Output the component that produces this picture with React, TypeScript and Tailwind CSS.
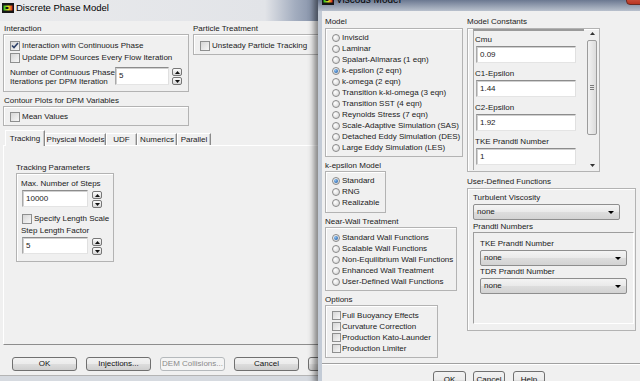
import React from "react";

const Check = ({ checked = false, small = false }: { checked?: boolean; small?: boolean }) => (
  <span
    className={`shrink-0 flex items-center justify-center border border-[#8e8f8f] bg-[linear-gradient(135deg,#d6d6d6,#f7f7f7)] ${
      small ? "w-[9px] h-[9px]" : "w-[10px] h-[10px]"
    }`}
  >
    {checked && (
      <svg width="8" height="7" viewBox="0 0 8 7">
        <path d="M1 3.5 L3 5.5 L7 1" fill="none" stroke="#2d4068" strokeWidth="1.6" />
      </svg>
    )}
  </span>
);

const Radio = ({ on = false }: { on?: boolean }) => (
  <span className="shrink-0 w-[8px] h-[8px] rounded-full border border-[#8a8a8a] bg-[radial-gradient(circle_at_35%_35%,#ffffff,#d0d0d0)] flex items-center justify-center">
    {on && <span className="w-[4px] h-[4px] rounded-full bg-[radial-gradient(circle_at_35%_35%,#8cc0f0,#14509c)]" />}
  </span>
);

const RadioRow = ({ on = false, children }: { on?: boolean; children: React.ReactNode }) => (
  <div className="h-[11px] flex items-center gap-[2px] whitespace-nowrap">
    <Radio on={on} />
    <span>{children}</span>
  </div>
);

const CheckRow = ({
  checked = false,
  small = false,
  children,
  className = "",
}: {
  checked?: boolean;
  small?: boolean;
  children: React.ReactNode;
  className?: string;
}) => (
  <div className={`h-[11px] flex items-center whitespace-nowrap ${small ? "gap-[1px]" : "gap-[2px]"} ${className}`}>
    <Check checked={checked} small={small} />
    <span>{children}</span>
  </div>
);

const Box = ({ className = "", children }: { className?: string; children?: React.ReactNode }) => (
  <div className={`border border-[#b3b3b3] shadow-[inset_1px_1px_0_#ffffff] ${className}`}>{children}</div>
);

const Field = ({ value, className = "" }: { value: string; className?: string }) => (
  <div
    className={`shrink-0 bg-white border border-t-[#8c8c8c] border-l-[#a9a9a9] border-r-[#e0e0e0] border-b-[#e4e4e4] shadow-[inset_1px_1px_0_#d0d0d0] flex items-center pl-[3px] ${className}`}
  >
    {value}
  </div>
);

const SpinBtn = ({ up }: { up?: boolean }) => (
  <div className="w-[10px] h-[8px] rounded-[2px] border border-[#767676] bg-[linear-gradient(#fbfbfb,#d8d8d8)] flex items-center justify-center">
    <svg width="5" height="3" viewBox="0 0 5 3">
      {up ? <path d="M0 3 L2.5 0 L5 3Z" fill="#111" /> : <path d="M0 0 L5 0 L2.5 3Z" fill="#111" />}
    </svg>
  </div>
);

const Spin = () => (
  <div className="flex flex-col gap-[1px] mt-[1px]">
    <SpinBtn up />
    <SpinBtn />
  </div>
);

const Select = ({ className = "" }: { className?: string }) => (
  <div
    className={`h-[16px] shrink-0 rounded-[2px] border border-[#8e8e8e] bg-[linear-gradient(#f4f4f4,#e9e9e9_50%,#dddddd_51%,#d3d3d3)] flex items-center justify-between pl-[3px] pr-[5px] ${className}`}
  >
    <span>none</span>
    <svg width="6" height="3" viewBox="0 0 6 3">
      <path d="M0 0H6L3 3Z" fill="#000" />
    </svg>
  </div>
);

const Btn = ({
  children,
  className = "",
  disabled = false,
}: {
  children: React.ReactNode;
  className?: string;
  disabled?: boolean;
}) => (
  <div
    className={`shrink-0 rounded-[3px] border flex items-center justify-center whitespace-nowrap ${
      disabled
        ? "border-[#b5b9bc] bg-[#f4f4f4] text-[#8a8a8a]"
        : "border-[#707070] bg-[linear-gradient(#f2f2f2,#ebebeb_50%,#dddddd_51%,#cfcfcf)] text-[#111]"
    } ${className}`}
  >
    {children}
  </div>
);

const Tab = ({ label, sel = false, w }: { label: string; sel?: boolean; w: string }) => (
  <div
    className={`${w} shrink-0 flex items-center justify-center border-l border-t border-r border-l-white border-t-white border-r-[#8a8a8a] shadow-[inset_-1px_0_0_#c8c8c8] bg-[#f0f0f0] whitespace-nowrap ${
      sel ? "h-[16px] -mb-[1px] relative z-10" : "h-[12px]"
    }`}
  >
    {label}
  </div>
);

const FluentIcon = ({ id }: { id: string }) => (
  <svg width="12" height="10" viewBox="0 0 12 10" className="shrink-0">
    <defs>
      <linearGradient id={id} x1="0" x2="1" y1="0" y2="0">
        <stop offset="0" stopColor="#1fc21f" />
        <stop offset="0.55" stopColor="#e6df22" />
        <stop offset="1" stopColor="#e02020" />
      </linearGradient>
    </defs>
    <rect x="0" y="0" width="12" height="10" fill="#161616" />
    <rect x="1.5" y="2.5" width="9" height="5" fill={`url(#${id})`} />
    <rect x="3.5" y="4" width="3" height="2" fill="#161616" />
  </svg>
);

function DiscreteWindow() {
  return (
    <div className="absolute left-0 top-0 w-[400px] h-[381px] bg-[#f0f0f0] flex flex-col overflow-hidden">
      {/* title bar */}
      <div className="h-[21px] shrink-0 flex items-start gap-[2px] pl-[2px] pt-[1px] bg-[linear-gradient(90deg,#e9eaec_0px,#e2e4e8_265px,#a3adbf_295px,#7d8aa2_320px)]">
        <div className="mt-[2px]">
          <FluentIcon id="fi1" />
        </div>
        <span className="text-[9.5px] leading-[14px] text-black">Discrete Phase Model</span>
      </div>

      <div className="flex flex-col px-[3px]">
        {/* top row */}
        <div className="mt-[3px] flex gap-[4px]">
          <div className="w-[186px] shrink-0 flex flex-col">
            <div className="pl-[1px]">Interaction</div>
            <Box className="h-[58px] pt-[5px] pl-[6px] flex flex-col">
              <CheckRow checked>Interaction with Continuous Phase</CheckRow>
              <CheckRow className="mt-[1px]">Update DPM Sources Every Flow Iteration</CheckRow>
              <div className="mt-[4px] flex">
                <div className="w-[105px] shrink-0 leading-[9px] whitespace-nowrap pt-[1px]">
                  Number of Continuous Phase
                  <br />
                  Iterations per DPM Iteration
                </div>
                <Field value="5" className="w-[54px] h-[18px]" />
                <div className="ml-[3px]">
                  <Spin />
                </div>
              </div>
            </Box>
          </div>
          <div className="flex-1 flex flex-col">
            <div>Particle Treatment</div>
            <Box className="h-[21px] pt-[5px] pl-[6px]">
              <CheckRow>Unsteady Particle Tracking</CheckRow>
            </Box>
          </div>
        </div>

        <div className="mt-[4px] pl-[1px]">Contour Plots for DPM Variables</div>
        <Box className="w-[186px] h-[20px] pt-[4px] pl-[6px]">
          <CheckRow>Mean Values</CheckRow>
        </Box>

        {/* tabs */}
        <div className="mt-[4px] flex items-end pl-[2px] h-[15px]">
          <Tab label="Tracking" sel w="w-[40px]" />
          <Tab label="Physical Models" w="w-[61px]" />
          <Tab label="UDF" w="w-[31px]" />
          <Tab label="Numerics" w="w-[40px]" />
          <Tab label="Parallel" w="w-[34px]" />
        </div>
        <div className="h-[200px] border-t border-l border-b border-t-white border-l-white border-b-[#8d8d8d] flex flex-col pt-[17px] pl-[12px]">
          <div>Tracking Parameters</div>
          <Box className="w-[98px] h-[89px] pt-[5px] pl-[4px] flex flex-col">
            <div>Max. Number of Steps</div>
            <div className="mt-[1px] pl-[1px] flex">
              <Field value="10000" className="w-[66px] h-[17px]" />
              <div className="ml-[4px]">
                <Spin />
              </div>
            </div>
            <CheckRow className="mt-[5px] pl-[1px]">Specify Length Scale</CheckRow>
            <div className="mt-[2px]">Step Length Factor</div>
            <div className="mt-[1px] pl-[1px] flex">
              <Field value="5" className="w-[66px] h-[17px]" />
              <div className="ml-[4px]">
                <Spin />
              </div>
            </div>
          </Box>
        </div>

        {/* buttons */}
        <div className="mt-[12px] flex gap-[9px] pl-[9px]">
          <Btn className="w-[65px] h-[14px]">OK</Btn>
          <Btn className="w-[65px] h-[14px]">Injections...</Btn>
          <Btn className="w-[65px] h-[14px]" disabled>
            DEM Collisions...
          </Btn>
          <Btn className="w-[65px] h-[14px]">Cancel</Btn>
          <Btn className="w-[65px] h-[14px]">Help</Btn>
        </div>
      </div>
      <div className="mt-[4px] flex-1 border-t border-t-[#b4b4b4] bg-[#d6dae0]" />
    </div>
  );
}

function ViscousWindow() {
  const modelItems = [
    "Inviscid",
    "Laminar",
    "Spalart-Allmaras (1 eqn)",
    "k-epsilon (2 eqn)",
    "k-omega (2 eqn)",
    "Transition k-kl-omega (3 eqn)",
    "Transition SST (4 eqn)",
    "Reynolds Stress (7 eqn)",
    "Scale-Adaptive Simulation (SAS)",
    "Detached Eddy Simulation (DES)",
    "Large Eddy Simulation (LES)",
  ];
  const wallItems = [
    "Standard Wall Functions",
    "Scalable Wall Functions",
    "Non-Equilibrium Wall Functions",
    "Enhanced Wall Treatment",
    "User-Defined Wall Functions",
  ];
  const constants = [
    ["Cmu", "0.09"],
    ["C1-Epsilon", "1.44"],
    ["C2-Epsilon", "1.92"],
    ["TKE Prandtl Number", "1"],
  ];
  return (
    <div className="absolute left-[318px] top-[-11px] w-[342px] h-[395px] flex flex-col bg-[#c3cbd6] shadow-[-4px_0_6px_rgba(0,0,0,0.45)]">
      <div className="relative h-[22px] shrink-0 flex items-center gap-[2px] pl-[4px] bg-[linear-gradient(#33425f,#6b7891_50%,#b9c1cd)]">
        <FluentIcon id="fi2" />
        <span className="text-[10px] leading-[12px] text-black">Viscous Model</span>
        <div className="absolute left-[308px] top-0 w-[43px] h-[16px] rounded-b-[4px] border border-[#6a2a22] bg-[linear-gradient(#e9a393,#cf5a45_50%,#b93522)]" />
      </div>
      <div className="flex-1 flex px-[4px]">
        <div className="flex-1 flex flex-col bg-[#f0f0f0]">
          <div className="h-[352px] shrink-0 flex gap-[4px] pl-[3px] pt-[6px]">
            {/* left column */}
            <div className="w-[138px] shrink-0 flex flex-col">
              <div>Model</div>
              <Box className="mt-[1px] pt-[3px] pb-[3px] pl-[6px]">
                {modelItems.map((m) => (
                  <RadioRow key={m} on={m === "k-epsilon (2 eqn)"}>
                    {m}
                  </RadioRow>
                ))}
              </Box>
              <div className="mt-[4px]">k-epsilon Model</div>
              <Box className="w-[61px] pt-[3px] pb-[4px] pl-[6px]">
                <RadioRow on>Standard</RadioRow>
                <RadioRow>RNG</RadioRow>
                <RadioRow>Realizable</RadioRow>
              </Box>
              <div className="mt-[4px]">Near-Wall Treatment</div>
              <Box className="w-[132px] pt-[4px] pb-[3px] pl-[6px]">
                {wallItems.map((m, i) => (
                  <RadioRow key={m} on={i === 0}>
                    {m}
                  </RadioRow>
                ))}
              </Box>
              <div className="mt-[4px]">Options</div>
              <Box className="w-[113px] pt-[4px] pb-[3px] pl-[6px]">
                <CheckRow small>Full Buoyancy Effects</CheckRow>
                <CheckRow small>Curvature Correction</CheckRow>
                <CheckRow small>Production Kato-Launder</CheckRow>
                <CheckRow small>Production Limiter</CheckRow>
              </Box>
            </div>

            {/* right column */}
            <div className="flex-1 flex flex-col">
              <div>Model Constants</div>
              <Box className="mt-[1px] w-[133px] h-[144px] flex pl-[5px] pr-[1px] pb-[1px]">
                <div className="w-[111px] h-[141px] shrink-0 border-t-2 border-l border-t-[#9a9a9a] border-l-[#a8a8a8] pt-[4px] pl-[1px] flex flex-col">
                  {constants.map(([l, v], i) => (
                    <div key={l} className={`flex flex-col ${i > 0 ? "mt-[6px]" : ""}`}>
                      <div>{l}</div>
                      <Field value={v} className="mt-[1px] ml-[1px] w-[100px] h-[17px]" />
                    </div>
                  ))}
                </div>
                <div className="ml-[3px] w-[10px] shrink-0 flex flex-col items-center">
                  <svg width="5" height="3" viewBox="0 0 5 3" className="mt-[3px]">
                    <path d="M0 3 L2.5 0 L5 3Z" fill="#333" />
                  </svg>
                  <div className="mt-[5px] w-[10px] h-[95px] rounded-[2px] border border-[#9c9c9c] bg-[linear-gradient(90deg,#f2f2f2,#dcdcdc)] flex flex-col items-center justify-center gap-[1px]">
                    <div className="w-[4px] h-[1px] bg-[#7a7a7a]" />
                    <div className="w-[4px] h-[1px] bg-[#7a7a7a]" />
                    <div className="w-[4px] h-[1px] bg-[#7a7a7a]" />
                  </div>
                  <svg width="5" height="3" viewBox="0 0 5 3" className="mt-[29px]">
                    <path d="M0 0 L5 0 L2.5 3Z" fill="#333" />
                  </svg>
                </div>
              </Box>

              <div className="mt-[5px]">User-Defined Functions</div>
              <Box className="mt-[1px] w-[169px] h-[143px] pl-[5px] pr-[1px] pt-[4px] flex flex-col">
                <div>Turbulent Viscosity</div>
                <Select className="mt-[1px] w-[147px]" />
                <div className="mt-[2px]">Prandtl Numbers</div>
                <div className="h-[92px] border border-t-[#9d9d9d] border-l-[#9d9d9d] border-r-white border-b-white pl-[6px] pt-[6px] flex flex-col">
                  <div>TKE Prandtl Number</div>
                  <Select className="mt-[1px] w-[147px]" />
                  <div className="mt-[1px]">TDR Prandtl Number</div>
                  <Select className="mt-[1px] w-[147px]" />
                </div>
              </Box>
            </div>
          </div>
          <div className="border-t border-t-[#a0a0a0] border-b border-b-white" />
          <div className="mt-[6px] flex pl-[111px]">
            <Btn className="w-[33px] h-[18px]">OK</Btn>
            <Btn className="ml-[7px] w-[32px] h-[18px]">Cancel</Btn>
            <Btn className="ml-[8px] w-[32px] h-[18px]">Help</Btn>
          </div>
        </div>
      </div>
    </div>
  );
}

export default function App() {
  return (
    <div className="relative w-[640px] h-[381px] overflow-hidden bg-[#f0f0f0] font-['Liberation_Sans',Arial,sans-serif] text-[8px] leading-[10px] text-[#1a1a1a]">
      <DiscreteWindow />
      <ViscousWindow />
    </div>
  );
}
